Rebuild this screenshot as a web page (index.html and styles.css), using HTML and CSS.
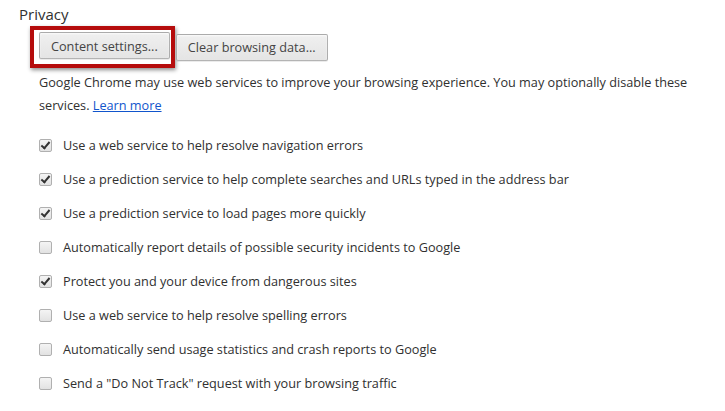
FILE: index.html
```html
<!DOCTYPE html>
<html lang="en">
<head>
  <meta charset="UTF-8" />
  <title>Settings - Privacy</title>
  <link rel="stylesheet" href="styles.css">
</head>
<body>
  <section class="privacy">
    <h3>Privacy</h3>

    <div class="buttons">
      <span class="highlight">
        <button type="button">Content settings...</button>
      </span>
      <button type="button">Clear browsing data...</button>
    </div>

    <p class="desc">
      Google Chrome may use web services to improve your browsing experience. You may optionally disable these
      services. <a href="#">Learn more</a>
    </p>

    <ul class="options">
      <li><span class="box checked"></span>Use a web service to help resolve navigation errors</li>
      <li><span class="box checked"></span>Use a prediction service to help complete searches and URLs typed in the address bar</li>
      <li><span class="box checked"></span>Use a prediction service to load pages more quickly</li>
      <li><span class="box"></span>Automatically report details of possible security incidents to Google</li>
      <li><span class="box checked"></span>Protect you and your device from dangerous sites</li>
      <li><span class="box"></span>Use a web service to help resolve spelling errors</li>
      <li><span class="box"></span>Automatically send usage statistics and crash reports to Google</li>
      <li><span class="box"></span>Send a "Do Not Track" request with your browsing traffic</li>
    </ul>
  </section>
</body>
</html>
```

FILE: styles.css
```css
body {
  margin: 0;
  background: #fff;
  font-family: "Open Sans", "Noto Sans", sans-serif;
  font-size: 12.7px;
  color: #303030;
}
.privacy {
  padding: 4px 0 0 19px;
}
h3 {
  margin: 0;
  font-size: 15px;
  font-weight: normal;
  color: #303030;
  line-height: 20px;
}
.buttons {
  display: flex;
  align-items: center;
  gap: 1px;
  margin: 2px 0 0 20px;
}
.highlight {
  display: inline-flex;
  margin-left: -9px;
  padding: 2px 1px 5px 5px;
  border: 4px solid #b50c0c;
  box-shadow: 1px 2px 4px rgba(0, 0, 0, 0.45);
}
button {
  font-family: inherit;
  font-size: 12.7px;
  color: #444;
  height: 27px;
  padding: 0 11px;
  border: 1px solid rgba(0, 0, 0, 0.25);
  border-radius: 2px;
  background: linear-gradient(#f0f0f0, #e4e4e4);
  box-shadow: 0 1px 0 rgba(0, 0, 0, 0.08), inset 0 1px 2px rgba(255, 255, 255, 0.75);
}
.desc {
  margin: 3px 0 0 20px;
  line-height: 23px;
  width: 670px;
}
.desc a {
  color: #1155cc;
}
.options {
  list-style: none;
  margin: 11px 0 0 20px;
  padding: 0;
}
.options li {
  display: flex;
  align-items: center;
  height: 34px;
}
.box {
  width: 11px;
  height: 11px;
  margin-right: 11px;
  border: 1px solid #b0b0b0;
  border-radius: 2px;
  background: linear-gradient(#f4f4f4, #e2e2e2);
  position: relative;
}
.box.checked::after {
  content: "";
  position: absolute;
  left: 3px;
  top: 0px;
  width: 3px;
  height: 7px;
  border: solid #333;
  border-width: 0 2px 2px 0;
  transform: rotate(40deg);
}
```
